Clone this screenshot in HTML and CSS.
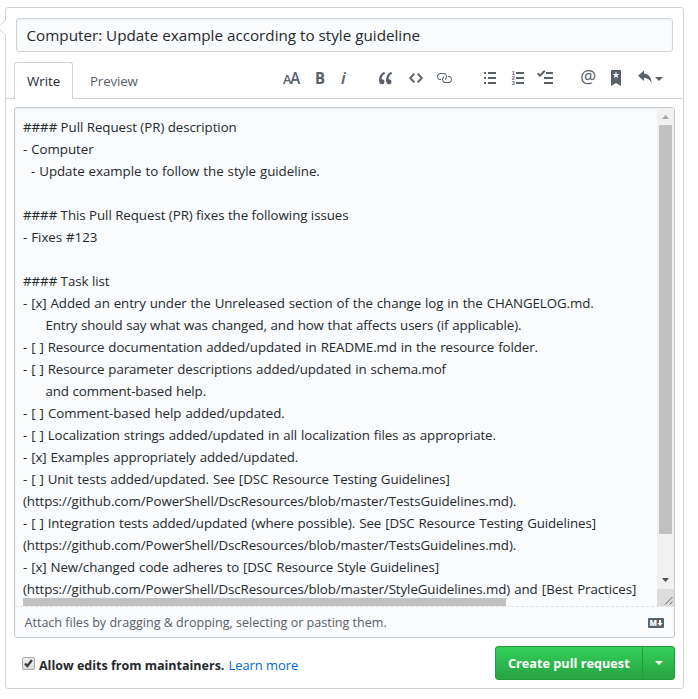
FILE: index.html
```
<!DOCTYPE html>
<html lang="en">
<head>
<meta charset="utf-8">
<title>Open a pull request</title>
<link rel="stylesheet" href="styles.css">
</head>
<body>
<main class="card">
  <svg class="pointer" width="7" height="16" viewBox="0 0 7 16"><path d="M7 0 0 7.5 7 15z" fill="#fff"/><path d="M6 0 -1 7.5 6 15" fill="none" stroke="#d1d5da"/></svg>
  <div class="title">Computer: Update example according to style guideline</div>
  <header class="tabs">
    <div class="tab active">Write</div>
    <div class="tab preview">Preview</div>
    <div class="toolbar">
      <div class="group g1">
        <svg width="18" height="16"><text class="glyph" x="0" y="14" font-size="13" textLength="8.500" lengthAdjust="spacingAndGlyphs">A</text><text class="glyph" x="7.300" y="14" font-size="16.500" textLength="10" lengthAdjust="spacingAndGlyphs">A</text></svg>
        <svg width="10" height="16"><text class="glyph bold" x="0" y="14" font-size="16.500" textLength="10" lengthAdjust="spacingAndGlyphs">B</text></svg>
        <svg width="8" height="16"><text class="glyph italic" x="2" y="14" font-size="17">i</text></svg>
      </div>
      <div class="group g2">
        <svg width="14" height="16"><path d="M6.16 3.5C3.73 5.06 2.55 6.67 2.55 9.36c.16-.05.3-.05.44-.05 1.27 0 2.5.86 2.5 2.41 0 1.61-1.03 2.61-2.5 2.61-1.9 0-2.99-1.52-2.99-4.25 0-3.8 1.75-6.53 5.02-8.42L6.16 3.5zm7 0c-2.43 1.56-3.61 3.17-3.61 5.86.16-.05.3-.05.44-.05 1.27 0 2.5.86 2.5 2.41 0 1.61-1.03 2.61-2.5 2.61-1.89 0-2.98-1.52-2.98-4.25 0-3.8 1.75-6.53 5.02-8.42l1.14 1.84z"/></svg>
        <svg width="14" height="16"><path d="M9.5 3 8 4.5 11.5 8 8 11.5 9.5 13 14 8 9.5 3zm-5 0L0 8l4.5 5L6 11.5 2.5 8 6 4.5 4.5 3z"/></svg>
        <svg width="16" height="16"><path d="M4 9h1v1H4c-1.5 0-3-1.69-3-3.5S2.55 3 4 3h4c1.45 0 3 1.69 3 3.5 0 1.41-.91 2.72-2 3.25V8.59c.58-.45 1-1.27 1-2.09C10 5.22 8.98 4 8 4H4c-.98 0-2 1.22-2 2.5S3 9 4 9zm9-3h-1v1h1c1 0 2 1.22 2 2.5S13.98 12 13 12H9c-.98 0-2-1.22-2-2.5 0-.83.42-1.64 1-2.09V6.25c-1.09.53-2 1.84-2 3.25C6 11.31 7.55 13 9 13h4c1.45 0 3-1.69 3-3.5S14.5 6 13 6z"/></svg>
      </div>
      <div class="group g3">
        <svg width="12" height="16"><path d="M0 2h2v2H0zM4 2h8v2H4zM0 7h2v2H0zM4 7h8v2H4zM0 12h2v2H0zM4 12h8v2H4z"/></svg>
        <svg width="12" height="16"><path d="M4 2h8v2H4zM4 7h8v2H4zM4 12h8v2H4z"/><text class="digit" x="-.3" y="4.800">1</text><text class="digit" x="-.3" y="9.900">2</text><text class="digit" x="-.3" y="15">3</text></svg>
        <svg width="16" height="16"><path d="M7 7h9v2H7zM9 2h7v2H9zM7 12h9v2H7zM0 3.91l1.41-1.3L3 4.2 7.09 0 8.5 1.41 3 6.91z"/></svg>
      </div>
      <div class="group g4">
        <svg width="15" height="16"><text class="glyph at" x="-.7" y="12.500" font-size="17.500" textLength="16" lengthAdjust="spacingAndGlyphs">@</text></svg>
        <svg width="10" height="16"><path d="M9 0H1C.27 0 0 .27 0 1v15l5-3.09L10 16V1c0-.73-.27-1-1-1zm-.78 4.25L6.36 5.61l.72 2.16c.06.22-.02.28-.2.17L5 6.6 3.12 7.94c-.19.11-.25.05-.2-.17l.72-2.16-1.86-1.36c-.17-.16-.14-.23.09-.23l2.3-.03.7-2.16h.25l.7 2.16 2.3.03c.23 0 .27.08.09.23z"/></svg>
        <svg width="25" height="16"><path d="M6 3.5c3.92.44 7.500 2.800 7.500 9.500-1.700-3.700-4.200-4.800-7.500-5v3L0 5.700 6 .5zM17 7h8l-4 4z"/></svg>
      </div>
    </div>
  </header>
  <section class="editor">
    <div class="body">
<div class="text"><div class="head">#### Pull Request (PR) description</div><div>- Computer</div><div>  - Update example to follow the style guideline.</div><div> </div><div class="head">#### This Pull Request (PR) fixes the following issues</div><div>- Fixes #123</div><div> </div><div class="head">#### Task list</div><div class="item">- [x] Added an entry under the Unreleased section of the change log in the CHANGELOG.md.</div><div class="cont">      Entry should say what was changed, and how that affects users (if applicable).</div><div class="item">- [ ] Resource documentation added/updated in README.md in the resource folder.</div><div class="item">- [ ] Resource parameter descriptions added/updated in schema.mof</div><div class="cont">      and comment-based help.</div><div>- [ ] Comment-based help added/updated.</div><div class="item">- [ ] Localization strings added/updated in all localization files as appropriate.</div><div class="item">- [x] Examples appropriately added/updated.</div><div class="item">- [ ] Unit tests added/updated. See [DSC Resource Testing Guidelines]</div><div class="url">(https://github.com/PowerShell/DscResources/blob/master/TestsGuidelines.md).</div><div class="item">- [ ] Integration tests added/updated (where possible). See [DSC Resource Testing Guidelines]</div><div class="url">(https://github.com/PowerShell/DscResources/blob/master/TestsGuidelines.md).</div><div class="item">- [x] New/changed code adheres to [DSC Resource Style Guidelines]</div><div class="url last">(https://github.com/PowerShell/DscResources/blob/master/StyleGuidelines.md) and [Best Practices]</div></div>
      <div class="hthumb"></div>
      <div class="vbar">
        <svg width="17" height="17"><path d="M5 11h7L8.500 7z" fill="#a3a3a3"/></svg>
        <div class="vthumb"></div>
        <svg class="down" width="17" height="17"><path d="M5 6h7l-3.500 4z" fill="#505050"/></svg>
        <svg class="corner" width="17" height="17"><path d="M8 15.500 15.500 8M12.500 15.500l3-3" stroke="#666"/></svg>
      </div>
    </div>
    <footer class="attach"><span>Attach files by dragging &amp; dropping, selecting or pasting them.</span>
      <svg width="16" height="10"><rect width="16" height="10" rx="1" fill="#586069"/><text class="glyph mark" x="1.500" y="8" font-size="8.500" textLength="7.500" lengthAdjust="spacingAndGlyphs">M</text><path d="M11 2h2v3h1.700L12 8.300 9.300 5H11z" fill="#fff"/></svg>
    </footer>
  </section>
  <div class="actions">
    <svg class="check" width="13" height="13"><defs><linearGradient id="cg" x2="0" y2="1"><stop stop-color="#f0f0f0"/><stop offset="1" stop-color="#dcdcdc"/></linearGradient></defs><rect x=".5" y=".5" width="12" height="12" rx="1.500" fill="url(#cg)" stroke="#a8a8a8"/><path d="M3 6.500 5.300 9 10 3" fill="none" stroke="#3c3c3c" stroke-width="2.200"/></svg>
    <b class="allow">Allow edits from maintainers.</b>
    <a class="learn">Learn more</a>
    <div class="button"><span class="create">Create pull request</span><span class="drop"><svg width="8" height="4"><path d="M0 0h8L4 4z" fill="#fff"/></svg></span></div>
  </div>
</main>
</body>
</html>
```
FILE: styles.css
```
* { box-sizing: border-box; }
body { margin: 0; background: #fff; color: #24292e; font: 13.3px/22px "Open Sans", "Noto Sans", sans-serif; }
svg { display: block; flex: none; overflow: visible; }
.card { position: relative; width: 679px; height: 682px; margin: 7px 0 0 5px; border: 1px solid #d1d5da; border-radius: 3px; padding-top: 10px; }
.pointer { position: absolute; left: -7px; top: 12px; overflow: hidden; }
.title { width: 657px; height: 34px; margin-left: 10px; padding: 0 9.5px; line-height: 32px; font-size: 15.22px; background: #fafbfc; border: 1px solid #d1d5da; border-radius: 3px; box-shadow: inset 0 1px 2px rgba(27,31,35,.075); white-space: nowrap; }
.tabs { display: flex; height: 37px; margin-top: 10px; padding-left: 8px; border-bottom: 1px solid #d1d5da; }
.tab { height: 37px; line-height: 37px; white-space: nowrap; }
.active { width: 59px; padding-left: 12px; background: #fff; border: 1px solid #d1d5da; border-bottom: 0; border-radius: 3px 3px 0 0; }
.preview { width: 193px; padding-left: 17px; color: #586069; line-height: 38px; letter-spacing: -.15px; }
.toolbar { display: flex; padding: 8px 0 0 17px; fill: #586069; }
.group { display: flex; gap: 14px; }
.g1 { width: 96px; }
.g2 { width: 105px; gap: 13.5px; }
.g2 svg:first-child { margin-right: 2px; }
.g3 { width: 97px; gap: 15px; }
.g3 svg:nth-child(2) { margin-left: 1px; margin-right: -2px; }
.g4 { gap: 15px; }
.g4 svg:last-child { margin-left: 2px; }
.glyph { fill: #586069; font-family: "Open Sans", sans-serif; font-weight: 600; }
.glyph.bold { font-weight: 700; }
.glyph.italic { font-style: italic; }
.glyph.at { font-weight: 400; }
.glyph.mark { fill: #fff; font-weight: 800; }
.digit { fill: #586069; font: 700 5.6px/1 "Liberation Sans", sans-serif; }
.editor { width: 661px; height: 531px; margin: 8px 0 0 8px; background: #fafbfc; border: 1px solid #c6cbd1; border-radius: 3px; box-shadow: inset 0 1px 2px rgba(27,31,35,.075); }
.body { position: relative; display: flex; height: 499px; border-bottom: 1px dashed #dfe2e5; }
.text { flex: 1; min-width: 0; height: 498px; padding: 8px 0 0 8px; overflow: hidden; white-space: pre; word-spacing: .6px; letter-spacing: -.04px; }
.text div { height: 22px; }
.text .head { word-spacing: 0; }
.text .item { word-spacing: .6px; letter-spacing: -.085px; }
.text .cont { word-spacing: .4px; letter-spacing: -.11px; }
.text .url { word-spacing: 0; letter-spacing: -.075px; }
.text .last { word-spacing: .8px; }
.hthumb { position: absolute; left: 8px; bottom: 0; width: 483px; height: 8px; background: #c1c1c1; }
.vbar { display: flex; flex-direction: column; width: 17px; background: #f1f1f1; }
.vthumb { width: 13px; height: 409px; margin: 0 2px; background: #c1c1c1; }
.down { margin-top: auto; }
.corner { background: #dcdcdc; }
.attach { display: flex; align-items: center; justify-content: space-between; height: 30px; padding: 1px 10px 0 9.5px; color: #586069; font-size: 12.55px; }
.actions { display: flex; height: 50px; padding-left: 16px; align-items: center; }
.allow { margin: 5px 0 0 4px; font-weight: 700; font-size: 12.5px; }
.learn { margin: 4px 0 0 4px; color: #0366d6; font-size: 12.9px; }
.button { display: flex; width: 180px; height: 34px; margin: 0 8px 0 auto; border: 1px solid #249c3e; border-radius: 3px; color: #fff; background: linear-gradient(#34d058, #28a745 90%); font-weight: 700; font-size: 12.7px; line-height: 32px; }
.create { width: 146px; padding-left: 12px; white-space: nowrap; }
.drop { flex: 1; display: flex; align-items: center; justify-content: center; border-left: 1px solid #249c3e; }
```
